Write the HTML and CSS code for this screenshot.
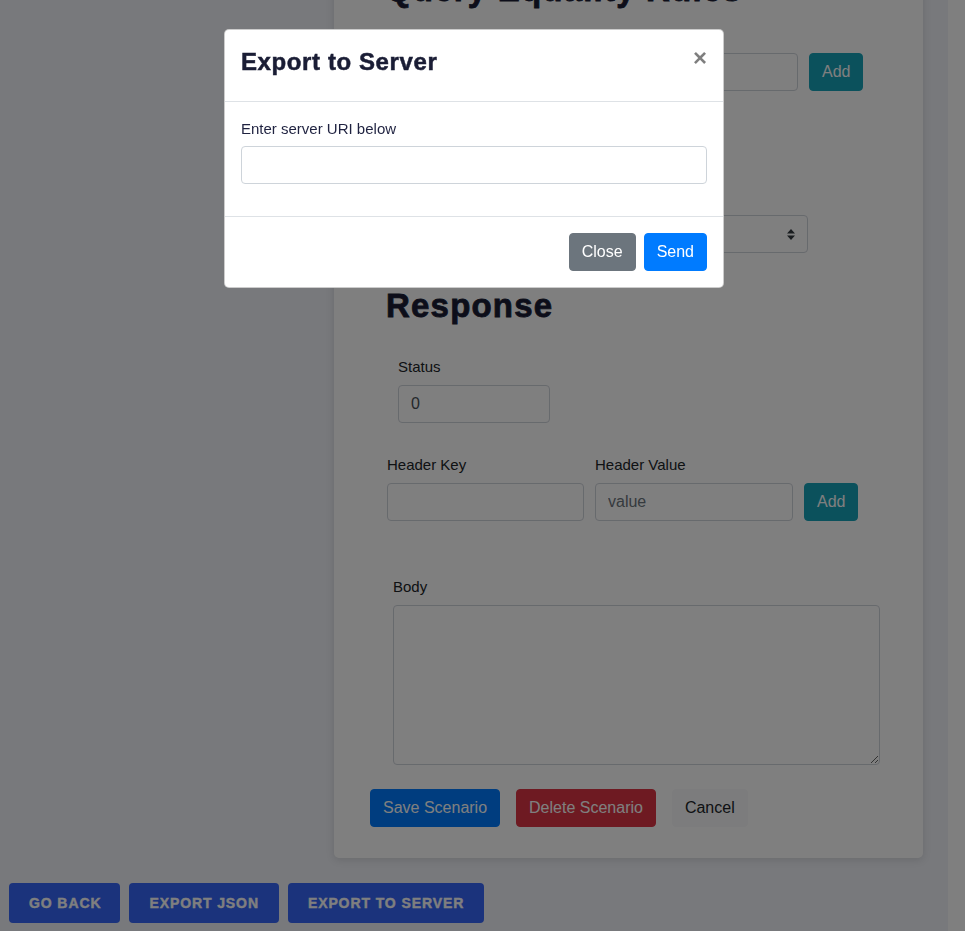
FILE: index.html
```html
<!DOCTYPE html>
<html lang="en">
<head>
<meta charset="utf-8">
<title>Scenario editor</title>
<link rel="stylesheet" href="styles.css">
</head>
<body>
<div class="app">
  <main class="page">
    <div class="workspace">
      <section class="card">
        <div class="rules">
          <h2 class="section-title rules-title">Query Equality Rules</h2>
          <div class="kv-row rules-row">
            <div class="field key-field"><label class="label">Query Key</label><input class="control" type="text"></div>
            <div class="field value-field"><label class="label">Query Value</label><input class="control" type="text" placeholder="value"></div>
            <button class="btn btn-info">Add</button>
          </div>
          <div class="field match-field">
            <label class="label">Method</label>
            <div class="select">
              <span class="select-value"></span>
              <svg class="select-arrows" width="8" height="11" viewBox="0 0 8 11"><path d="M4 0 L8 4.5 H0 Z M4 11 L0 6.5 H8 Z" fill="#343a40"/></svg>
            </div>
          </div>
        </div>

        <div class="response">
          <h2 class="section-title">Response</h2>
          <div class="field status-field">
            <label class="label">Status</label>
            <input class="control" type="text" value="0">
          </div>
          <div class="kv-row header-row">
            <div class="field hkey-field"><label class="label">Header Key</label><input class="control" type="text"></div>
            <div class="field hvalue-field"><label class="label">Header Value</label><input class="control" type="text" placeholder="value"></div>
            <button class="btn btn-info">Add</button>
          </div>
          <div class="field body-field">
            <label class="label">Body</label>
            <textarea class="control body-input"></textarea>
          </div>
        </div>

        <div class="form-actions">
          <button class="btn btn-primary">Save Scenario</button>
          <button class="btn btn-danger">Delete Scenario</button>
          <button class="btn btn-light">Cancel</button>
        </div>
      </section>
    </div>
    <div class="actions">
      <button class="action-btn back-btn">Go Back</button>
      <button class="action-btn">Export JSON</button>
      <button class="action-btn">Export to Server</button>
    </div>
  </main>
  <div class="gutter"></div>
</div>

<div class="backdrop"></div>
<div class="modal">
  <div class="dialog">
    <div class="modal-content">
      <div class="modal-header">
        <h5 class="modal-title">Export to Server</h5>
        <button class="close" aria-label="Close">&times;</button>
      </div>
      <div class="modal-body">
        <div class="form-group">
          <label class="modal-label">Enter server URI below</label>
          <input class="control" type="text">
        </div>
      </div>
      <div class="modal-footer">
        <button class="btn btn-secondary">Close</button>
        <button class="btn btn-send">Send</button>
      </div>
    </div>
  </div>
</div>
</body>
</html>
```

FILE: styles.css
```css
* { box-sizing: border-box; }

html, body {
  margin: 0;
  height: 100%;
  overflow: hidden;
}

body {
  font-family: "Liberation Sans", Arial, sans-serif;
  font-size: 16px;
  color: #212529;
  background: #f0f2f8;
}

.app {
  display: flex;
  min-height: 100vh;
}

.page {
  flex: 1;
  margin-top: -27px;
}

.gutter {
  width: 17px;
  background: #ffffff;
}

.workspace {
  display: flex;
  justify-content: flex-end;
  padding-right: 25px;
}

.card {
  width: 589px;
  background: #ffffff;
  border-radius: 0 0 5px 5px;
  box-shadow: 0 2px 8px rgba(0, 0, 0, 0.12);
  padding-bottom: 31px;
}

.section-title {
  margin: 0;
  font-size: 33px;
  line-height: 40px;
  font-weight: 700;
  letter-spacing: 1.2px;
  color: #1a1d35;
  -webkit-text-stroke: 0.8px #1a1d35;
}

.rules-title {
  margin-top: -3px;
}

.rules, .response {
  padding-left: 52px;
}

.label {
  display: block;
  font-size: 15px;
  line-height: 22px;
  padding-top: 1px;
  margin-bottom: 7px;
  color: #212529;
}

.control {
  display: block;
  width: 100%;
  height: 38px;
  padding: 6px 12px;
  font-family: inherit;
  font-size: 16px;
  color: #495057;
  background: #ffffff;
  border: 1px solid #ced4da;
  border-radius: 4px;
}

.control::placeholder { color: #6c757d; }

.kv-row {
  display: flex;
  align-items: flex-end;
  gap: 11px;
}

.rules-row {
  margin-top: 13px;
  padding-left: 1px;
}

.key-field { width: 202px; }
.value-field { width: 198px; }

.match-field {
  margin-top: 94px;
  padding-left: 1px;
  width: 422px;
}

.select {
  display: flex;
  align-items: center;
  justify-content: space-between;
  height: 38px;
  padding: 0 12px;
  border: 1px solid #ced4da;
  border-radius: 4px;
  background: #ffffff;
}

.response .section-title { margin-top: 33px; }

.status-field {
  margin-top: 29px;
  padding-left: 12px;
  width: 164px;
}

.header-row {
  margin-top: 30px;
  padding-left: 1px;
}

.hkey-field { width: 197px; }
.hvalue-field { width: 198px; }

.body-field {
  margin-top: 54px;
  padding-left: 7px;
  width: 494px;
}

.body-input {
  height: 160px;
  resize: vertical;
}

.btn {
  font-family: inherit;
  font-size: 16px;
  line-height: 24px;
  padding: 6px 12px;
  border: 1px solid transparent;
  border-radius: 4px;
  color: #ffffff;
  cursor: pointer;
}

.btn-info { background: #17a2b8; border-color: #17a2b8; }
.btn-primary { background: #007bff; border-color: #007bff; }
.btn-danger { background: #dc3545; border-color: #dc3545; }
.btn-light { background: #f8f9fa; border-color: #f8f9fa; color: #212529; }
.btn-secondary { background: #6c757d; border-color: #6c757d; }
.btn-send { background: #007bff; border-color: #007bff; }

.form-actions {
  display: flex;
  gap: 16px;
  margin-top: 24px;
  padding-left: 36px;
}

.actions {
  display: flex;
  gap: 9px;
  margin-top: 25px;
  padding-left: 9px;
}

.action-btn {
  height: 40px;
  padding: 0 20px;
  font-family: "Liberation Sans", Arial, sans-serif;
  font-size: 14px;
  font-weight: 700;
  letter-spacing: 0.9px;
  text-transform: uppercase;
  color: #ffffff;
  -webkit-text-stroke: 0.4px #ffffff;
  background: #3666f8;
  border: none;
  border-radius: 4px;
}

.back-btn {
  padding: 0 19px 0 20px;
}

/* Modal */
.backdrop {
  position: fixed;
  inset: 0;
  background: rgba(0, 0, 0, 0.5);
}

.modal {
  position: fixed;
  inset: 0;
  padding-right: 17px;
}

.dialog {
  width: 500px;
  margin: 29px auto 0;
}

.modal-content {
  background: #ffffff;
  border: 1px solid rgba(0, 0, 0, 0.2);
  border-radius: 5px;
}

.modal-header {
  display: flex;
  align-items: flex-start;
  justify-content: space-between;
  padding: 16px;
  border-bottom: 1px solid #dee2e6;
}

.modal-title {
  margin: 0 0 7px;
  font-size: 24px;
  line-height: 32px;
  font-weight: 700;
  letter-spacing: 0.6px;
  color: #1a1d35;
  -webkit-text-stroke: 0.5px #1a1d35;
}

.close {
  margin: -16px -16px -16px auto;
  padding: 16px;
  font-family: "Liberation Sans", Arial, sans-serif;
  font-size: 24px;
  font-weight: 700;
  line-height: 1;
  color: #000;
  opacity: 0.5;
  background: transparent;
  border: 0;
}

.modal-body {
  padding: 16px;
}

.form-group { margin-bottom: 16px; }

.modal-label {
  display: block;
  font-size: 15px;
  line-height: 20px;
  padding-top: 1px;
  margin-bottom: 7px;
  color: #1f2240;
}

.modal-footer {
  display: flex;
  justify-content: flex-end;
  gap: 8px;
  padding: 16px;
  border-top: 1px solid #dee2e6;
}
```
